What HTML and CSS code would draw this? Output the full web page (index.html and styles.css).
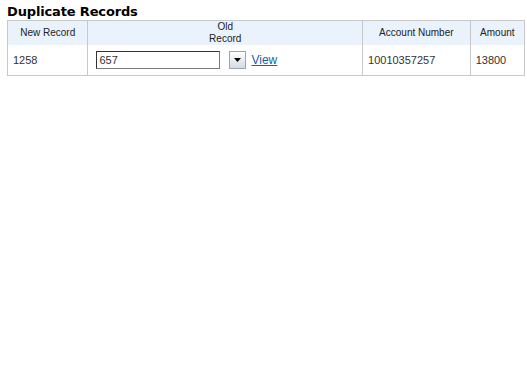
FILE: index.html
```html
<!DOCTYPE html>
<html lang="en">
<head>
    <meta charset="UTF-8">
    <title>Duplicate Records</title>
    <link rel="stylesheet" href="styles.css">
</head>
<body>
    <h2 class="title">Duplicate Records</h2>
    <table class="records">
        <thead>
            <tr>
                <th class="col-new">New Record</th>
                <th class="col-old">Old<br>Record</th>
                <th class="col-acc">Account Number</th>
                <th class="col-amt">Amount</th>
            </tr>
        </thead>
        <tbody>
            <tr>
                <td>1258</td>
                <td>
                    <div class="picker">
                        <input class="picker-input" type="text" value="657">
                        <span class="picker-btn">
                            <svg width="7" height="4" viewBox="0 0 7 4"><path d="M0 0h7L3.5 4z" fill="#000"/></svg>
                        </span>
                        <a class="view-link" href="#">View</a>
                    </div>
                </td>
                <td>10010357257</td>
                <td>13800</td>
            </tr>
        </tbody>
    </table>
</body>
</html>
```

FILE: styles.css
```css
body {
    margin: 0;
    padding: 4px 7px;
    background-color: #fff;
    font-family: "Liberation Sans", Arial, sans-serif;
}
.title {
    margin: 0;
    font-family: "DejaVu Sans", Verdana, sans-serif;
    font-size: 13px;
    font-weight: bold;
    line-height: 16px;
    letter-spacing: -0.15px;
    color: #000;
}
.records {
    width: 518px;
    border-collapse: collapse;
    font-size: 11px;
}
.records th,
.records td {
    border: 1px solid #c8c8c8;
    border-top: none;
    border-bottom: none;
}
.records th {
    background-color: #eaf2fb;
    color: #222;
    font-size: 10px;
    font-weight: normal;
    height: 24px;
    padding: 0 4px;
    line-height: 12px;
    text-align: center;
    border-top: 1px solid #c8c8c8;
}
.records td {
    height: 30px;
    padding: 0 5px;
    color: #333;
    border-bottom: 1px solid #c8c8c8;
}
.col-new { width: 71px; }
.col-old { width: 264px; }
.col-acc { width: 98px; }
.col-amt { width: 45px; }
.picker {
    display: flex;
    align-items: center;
    padding-left: 3px;
}
.picker-input {
    width: 118px;
    height: 14px;
    padding: 1px 2px;
    margin: 0;
    border: 1px solid #7a7a7a;
    border-top-color: #333;
    border-left-color: #333;
    font-family: "Liberation Sans", Arial, sans-serif;
    font-size: 11px;
    color: #333;
}
.picker-btn {
    display: flex;
    align-items: center;
    justify-content: center;
    width: 15px;
    height: 16px;
    margin-left: 9px;
    border: 1px solid #9aa4b4;
    background: linear-gradient(#ffffff, #d4dbe6);
}
.view-link {
    margin-left: 5px;
    font-size: 12px;
    color: #1a5fa8;
    text-decoration: underline;
}
```
